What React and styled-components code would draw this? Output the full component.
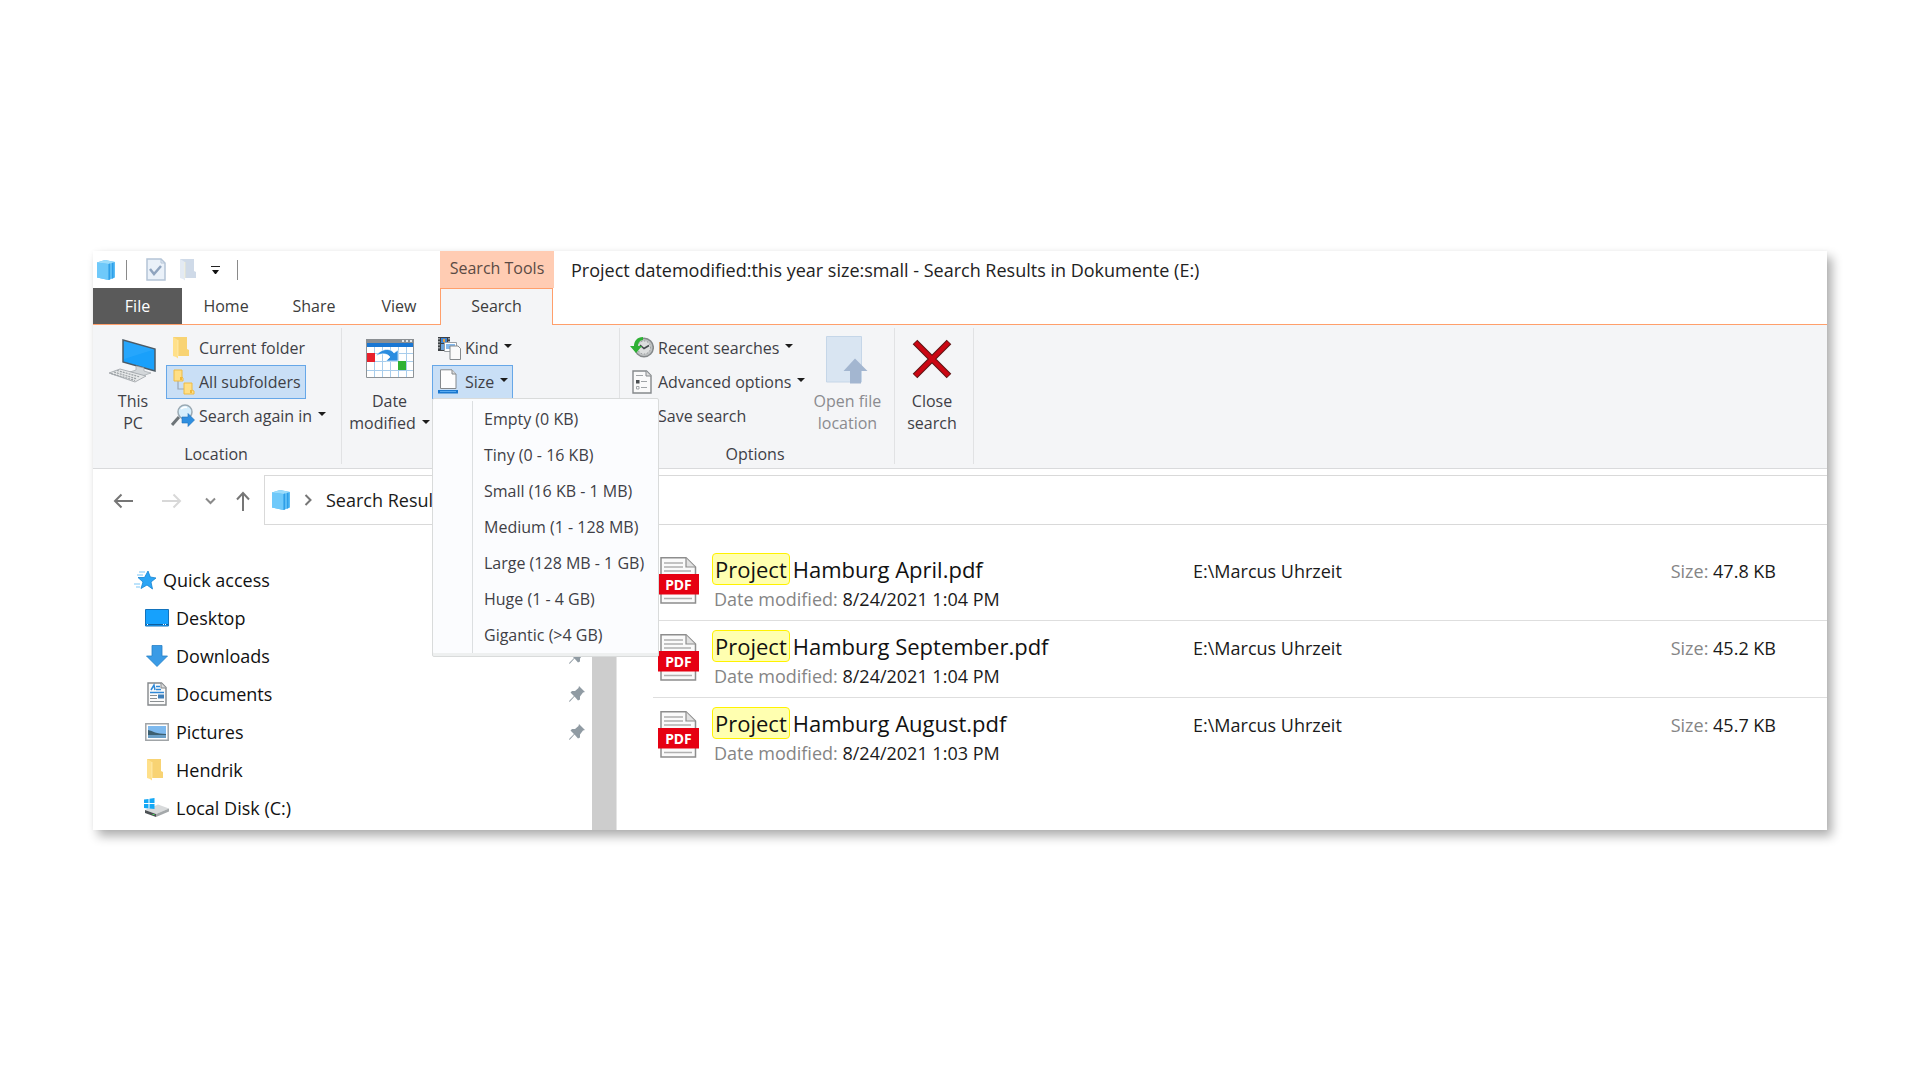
import React from 'react';
import styled, { createGlobalStyle, css } from 'styled-components';

const GlobalStyle = createGlobalStyle`
    *, *::before, *::after {
        box-sizing: border-box;
    }
    body {
        margin: 0;
        background: #ffffff;
        color: #1a1a1a;
        font-family: "Open Sans", "Noto Sans", sans-serif;
        font-size: 18px;
    }
    svg {
        display: block;
        flex: none;
    }
`

/* ---------- icons ---------- */

const CubeIcon = () => (
    <svg width="18" height="20" viewBox="0 0 18 20">
        <path d="M0 2.5 8 0l10 2v15.5L11.500 20 0 17.500z" fill="#5cbdf5" />
        <path d="M0 2.500 8 0l10 2-6.500 2z" fill="#9bdcfb" />
        <path d="M0 2.500 11.500 4v16L0 17.500z" fill="#6fc9fa" />
        <path d="M11.500 4 13 3.500v16l-1.500.500zM15 3l1.500-.400v15.500L15 18.700z" fill="#2e9fe8" />
    </svg>
)

const CheckDocIcon = () => (
    <svg width="20" height="23" viewBox="0 0 20 23">
        <path d="M1 1h14l4 4v17H1z" fill="#eaf1f9" stroke="#b4c4d6" strokeWidth="1.500" />
        <path d="M15 1v4h4" fill="none" stroke="#b4c4d6" />
        <path d="m4 11 4 5 7-8" fill="none" stroke="#8fa4bf" strokeWidth="2.500" />
    </svg>
)

const FolderIcon = ({ front = '#ffe08a', back = '#f8d373' }) => (
    <svg width="16" height="22" viewBox="0 0 16 22">
        <path d="M0 0h14v12l2 1v6H3z" fill={back} />
        <path d="M0 0 5 3v18.500L3 20l-3-1z" fill={front} />
        <path d="M5 3v16" stroke="#fff3c4" strokeOpacity=".6" />
    </svg>
)

const PcIcon = () => (
    <svg width="48" height="44" viewBox="0 0 48 44">
        <path d="M14 1 46 10v22L14 23z" fill="#19a0fb" stroke="#4d5b66" strokeWidth="1.500" />
        <path d="M15 2 45 10.500 15 20z" fill="#47b6ff" opacity=".3" />
        <path d="m27 27 8 2v3l7 2-9 3-12-4 6-2z" fill="#d3d7da" stroke="#a3a9ad" strokeWidth=".7" />
        <path d="m11 30 26 7-11 6L0 34z" fill="#e6e8e9" stroke="#9ba0a4" strokeWidth=".8" />
        <path d="m5 33 23 7M8 31.500l23 6.500M2 34.500l24 7" stroke="#9ba0a4" strokeWidth="1.200" strokeDasharray="2 1" />
    </svg>
)

const SubfoldersIcon = () => (
    <svg width="22" height="26" viewBox="0 0 22 26">
        <path d="M5 12v8h6" fill="none" stroke="#9aa7b5" strokeWidth="1.200" />
        <path d="M1 1h8v7l1 1v3H1z" fill="#ffdf85" stroke="#eebb45" />
        <path d="M11 14h8v7l2 1v3H11z" fill="#ffdf85" stroke="#eebb45" />
        <path d="M7 8h2v3H7zM17 21h2v3h-2z" fill="#f0b93c" />
    </svg>
)

const SearchAgainIcon = () => (
    <svg width="24" height="23" viewBox="0 0 24 23">
        <path d="m1 21 7-8" stroke="#6d7478" strokeWidth="3" />
        <circle cx="14" cy="8" r="7" fill="#d5eefc" stroke="#9aa9b3" strokeWidth="1.500" />
        <path d="M10 5a6 6 0 0 1 6-1.500" fill="none" stroke="#ffffff" strokeWidth="1.500" />
        <path d="M11 13h6V9.500l6.500 6.500-6.500 6.500V19h-6z" fill="#2f8fe0" stroke="#1c6fba" strokeWidth=".6" />
    </svg>
)

const CalendarIcon = () => (
    <svg width="48" height="39" viewBox="0 0 48 39">
        <path d="M.500.500h47v38H.500z" fill="#ffffff" stroke="#8d9296" />
        <path d="M0 0h48v4H0z" fill="#8b8f93" />
        <path d="M36 1h2v2h-2zM40 1h2v2h-2zM44 1h2v2h-2z" fill="#e4e6e7" />
        <path d="M1 4h46v4H1z" fill="#1976d2" />
        <path d="M8.500 8v30M16.500 8v30M24.500 8v30M32.500 8v30M40.500 8v30M1 14.500h46M1 22.500h46M1 31.500h46" stroke="#a8cdec" />
        <path d="M1 14h8v9H1z" fill="#e8202c" />
        <path d="M32 22h8v9h-8z" fill="#2fb233" />
        <path d="M10 17c4-7 14-9 18-3l4-3v11H20l4-4c-3-4-9-4-14-1z" fill="#2b8de0" stroke="#ffffff" strokeWidth=".6" />
    </svg>
)

const KindIcon = () => (
    <svg width="24" height="24" viewBox="0 0 24 24">
        <path d="M1 1h12v14H1z" fill="#3d4145" />
        <path d="M2 2v12M12 2v12" stroke="#d7dadc" strokeWidth="1.200" strokeDasharray="1.500 1.500" />
        <path d="M4 2h6v5H4z" fill="#3f86d8" />
        <path d="M6 3h2v3H6z" fill="#e8a23d" />
        <path d="M4 8h6v6H4z" fill="#6aa3dd" />
        <path d="M7.500 6.500h12v9h-12z" fill="#ffffff" stroke="#9a9fa3" />
        <path d="M9 8h9v5H9z" fill="#84b9ee" />
        <path d="M13 10h8l2.500 2.500V23.500H13z" fill="#fafafa" stroke="#85898c" />
    </svg>
)

const SizeIcon = () => (
    <svg width="22" height="25" viewBox="0 0 22 25">
        <path d="M3.500.800h11.500l4 4.200v14.500H3.500z" fill="#fdfdfd" stroke="#85898c" />
        <path d="M15 1v4h4" fill="#dddddd" stroke="#85898c" />
        <path d="M1 21h20v3.500H1z" fill="#1b78cf" />
        <path d="M3 22.500h16" stroke="#59aaf0" />
    </svg>
)

const RecentIcon = () => (
    <svg width="24" height="21" viewBox="0 0 24 21">
        <circle cx="14" cy="10.500" r="9.300" fill="#bfc2c3" stroke="#85898b" strokeWidth="1.500" />
        <circle cx="14" cy="10.500" r="6.500" fill="#dcdede" stroke="#8f9395" strokeDasharray="1 2" />
        <path d="m10 8 4 3.500 5-3" fill="none" stroke="#44494c" strokeWidth="1.500" />
        <path d="M13 0C7 0 4 4 4 9H0l6 7 6-7H8c0-3 2-6 5-6z" fill="#2eb135" />
    </svg>
)

const AdvancedIcon = () => (
    <svg width="20" height="24" viewBox="0 0 20 24">
        <path d="M1 1h13.500L19 5.500V23H1z" fill="#fafafa" stroke="#85898c" strokeWidth="1.400" />
        <path d="M14 1v5h5" fill="#dedede" stroke="#85898c" />
        <path d="M4 5.500h7M9 11.500h6M9 17.500h6" stroke="#a0a4a7" />
        <path d="M4 10h3.500v3.500H4z" fill="#4a4e51" />
        <path d="M4.500 16.500h2.500v2.500H4.500z" fill="#fff" stroke="#a0a4a7" />
    </svg>
)

const OpenLocationIcon = () => (
    <svg width="42" height="48" viewBox="0 0 42 48">
        <path d="M.500.500h35V46H.500z" fill="#d9e5f2" stroke="#c5d6e8" />
        <path d="M29 22.500 41.500 35H35v12.500H24V35h-6.500z" fill="#a3b6d0" />
    </svg>
)

const CloseIcon = () => (
    <svg width="40" height="40" viewBox="0 0 40 40">
        <path d="m3 3 34 34M37 3 3 37" stroke="#5c1414" strokeWidth="6.500" />
        <path d="m3.500 3.500 33 33M36.500 3.500l-33 33" stroke="#cb0713" strokeWidth="4.500" />
    </svg>
)

const ArrowIcon = ({ color = '#767676', flip }) => (
    <svg width="20" height="16" viewBox="0 0 20 16">
        <path d={flip ? 'M0 8h18M11.500 1.500 18 8l-6.500 6.500' : 'M20 8H2M8.500 1.500 2 8l6.500 6.500'} fill="none" stroke={color} strokeWidth="2" />
    </svg>
)

const DownChevron = () => (
    <svg width="11" height="8" viewBox="0 0 11 8">
        <path d="m1 1.500 4.500 4.500L10 1.500" fill="none" stroke="#8a8a8a" strokeWidth="2" />
    </svg>
)

const UpIcon = () => (
    <svg width="14" height="20" viewBox="0 0 14 20">
        <path d="M7 20V2M1 8.500 7 2l6 6.500" fill="none" stroke="#767676" strokeWidth="2" />
    </svg>
)

const RightChevron = () => (
    <svg width="8" height="12" viewBox="0 0 8 12">
        <path d="m1.500 1 5 5-5 5" fill="none" stroke="#767676" strokeWidth="2" />
    </svg>
)

const StarIcon = () => (
    <svg width="22" height="20" viewBox="0 0 22 20">
        <path d="m14 1 2.300 6L22 8l-5 4 1.500 7-5.500-4-6 3.500 2-6.500L4 7.500h6.500z" fill="#2ba5f5" stroke="#1583d1" strokeWidth=".8" />
        <path d="M5 2h6M3 5h6M0 14h6M2 17h4" stroke="#7cc7f7" strokeWidth="1.200" />
    </svg>
)

const DesktopIcon = () => (
    <svg width="24" height="18" viewBox="0 0 24 18">
        <path d="M.500.500h23v16.500H.500z" fill="#16a1fd" stroke="#1273bd" />
        <path d="M1 15.500h22" stroke="#0e5f9f" />
        <path d="M2 15.500h1M18 15.500h1M20 15.500h1" stroke="#fff" />
    </svg>
)

const DownloadIcon = () => (
    <svg width="22" height="22" viewBox="0 0 22 22">
        <path d="M6 .500h10V11h5.500L11 21.500.500 11H6z" fill="#3a9be6" stroke="#2680c7" strokeWidth=".8" />
    </svg>
)

const DocumentIcon = () => (
    <svg width="20" height="24" viewBox="0 0 20 24">
        <path d="M1 1h13.500L19 5.500V23H1z" fill="#fbfbfb" stroke="#85898c" strokeWidth="1.400" />
        <path d="M14 1v5h5" fill="#dedede" stroke="#85898c" />
        <path d="m4 8 3-5 1 5M9 4.500h4M9 7.500h5M3 10.500h14" fill="none" stroke="#2f88d6" strokeWidth="1.500" />
        <path d="M3 13.500h7M3 16.500h7M3 19.500h14" stroke="#8b9093" />
        <path d="M11 12.500h6v4h-6z" fill="#3f7fb8" />
    </svg>
)

const PictureIcon = () => (
    <svg width="24" height="18" viewBox="0 0 24 18">
        <path d="M.800.800h22.400v16.400H.800z" fill="#ffffff" stroke="#a0a4a7" strokeWidth="1.500" />
        <path d="M3 3h18v12H3z" fill="#7db9ee" />
        <path d="M3 7c5 1 8 4 18 4v4H3z" fill="#3d5f70" />
        <path d="M3 12h18v3H3z" fill="#6b9fc6" />
    </svg>
)

const DiskIcon = () => (
    <svg width="25" height="19" viewBox="0 0 25 19">
        <path d="M1 12 14 6.500l11 4L12 16z" fill="#d8dadb" />
        <path d="m1 12 11 4v3L1 15z" fill="#4c5154" />
        <path d="m12 16 13-5.500v3L12 19z" fill="#a4a8aa" />
        <path d="M8.500 16h2v1h-2z" fill="#4fdc5d" />
        <path d="m0 1.500 4.500-.600V5H0zM5.500.700 10.500 0v5h-5zM0 6h4.500v4.500L0 10zM5.500 6h5v5l-5-.600z" fill="#15a8f5" />
    </svg>
)

const PinIcon = () => (
    <svg width="16" height="16" viewBox="0 0 16 16">
        <path d="m10 0 6 6-2 .500-3 4 0 3-2 1-3.500-4L1 15.500 0 16l.500-1.500L5 10 1.500 6.500l1.500-1.500 3 0 3.500-3z" fill="#909ba3" />
    </svg>
)

const PdfIcon = () => (
    <svg width="42" height="47" viewBox="0 0 42 47">
        <path d="M3 .800h25L37.500 10v36H3z" fill="#fafafa" stroke="#8d8d8d" strokeWidth="1.500" />
        <path d="M28 1v9h9" fill="#e2e2e2" stroke="#8d8d8d" strokeWidth="1.200" />
        <path d="M6 6h19M6 10h19M6 14h27M6 41.500h28" stroke="#b0b0b0" strokeWidth="1.500" />
        <path d="M0 17h41v20.500H0z" fill="#e60012" />
        <text x="20.500" y="32.500" textAnchor="middle" fontFamily="Noto Sans" fontSize="14" fontWeight="700" fill="#ffffff">PDF</text>
    </svg>
)

/* ---------- layout ---------- */

const Page = styled.main`
    min-height: 100vh;
    padding: 0 93px;
    display: flex;
    align-items: center;
`
const Window = styled.section`
    flex: 1;
    min-width: 0;
    background: #ffffff;
    box-shadow: 5px 6px 10px rgba(0, 0, 0, 0.32), 0 0 4px rgba(0, 0, 0, 0.03);
`
const plainButton = css`
    border: 1px solid transparent;
    background: none;
    padding: 0;
    margin: 0;
    font: inherit;
    color: inherit;
    cursor: pointer;
`
const TitleBar = styled.header`
    display: flex;
    height: 37px;
`
const QuickBar = styled.div`
    flex: 0 0 347px;
    display: flex;
    align-items: center;
    padding: 1px 0 0 4px;
`
const QuickButton = styled.button`
    ${plainButton}
    border: 0;
    margin-left: ${props => props.$gap || 0}px;
`
const Divider = styled.span`
    width: 1px;
    height: 20px;
    margin-left: ${props => props.$gap}px;
    background: #8a8a8a;
`
const QuickCaret = styled.span`
    display: block;
    width: 9px;
    border-top: 1px solid #222222;
    padding-top: 3px;

    &::after {
        content: "";
        display: block;
        width: 7px;
        margin: 0 auto;
        border: solid transparent;
        border-width: 4px 3px 0;
        border-top-color: #111111;
    }
`
const ToolsTab = styled.div`
    flex: 0 0 114px;
    padding-bottom: 2px;
    display: flex;
    align-items: center;
    justify-content: center;
    background: #ffccb3;
    color: #5a4a44;
    font-size: 16px;
`
const WindowTitle = styled.h1`
    margin: 0;
    padding: 1px 17px 0;
    align-self: center;
    font-size: 18px;
    line-height: 24px;
    font-weight: 400;
    white-space: nowrap;
    color: #222222;
`
const Tabs = styled.nav`
    display: flex;
    height: 37px;
    border-bottom: 1px solid #ff9f6b;
`
const Tab = styled.button`
    ${plainButton}
    width: ${props => props.$width}px;
    font-size: 16px;
    color: #3c3c3c;

    ${props => props.$file && css`
        background: #5a5a5a;
        color: #ffffff;
    `}
    ${props => props.$active && css`
        margin-bottom: -1px;
        border: 1px solid #ff9f6b;
        border-bottom: 0;
        padding-bottom: 2px;
        background: #f4f5f7;
    `}
`
const Ribbon = styled.div`
    display: flex;
    height: 144px;
    padding: 3px 0 4px;
    background: #f4f5f7;
    border-bottom: 1px solid #d9dadc;
    font-size: 16px;
    color: #3f3f46;
`
const Group = styled.div`
    width: ${props => props.$width}px;
    display: flex;
    flex-direction: column;
    justify-content: space-between;
    border-right: 1px solid #e1e2e4;
`
const GroupBody = styled.div`
    display: flex;
    padding-left: ${props => props.$left || 0}px;
`
const GroupLabel = styled.div`
    padding-right: ${props => props.$shift || 0}px;
    text-align: center;
    line-height: 20px;
`
const BigButton = styled.button`
    ${plainButton}
    width: ${props => props.$width}px;
    height: 108px;
    padding-top: 7px;
    display: flex;
    flex-direction: column;
    align-items: center;
    line-height: 22px;
    white-space: nowrap;

    &:disabled {
        color: #8b8b8f;
        cursor: default;
    }
`
const BigIcon = styled.span`
    height: 54px;
    padding-top: ${props => props.$top || 0}px;
`
const SmallList = styled.div`
    display: flex;
    flex-direction: column;
    align-items: flex-start;
    padding-top: 3px;
`
const MenuAnchor = styled.div`
    position: relative;
`
const SmallButton = styled.button`
    ${plainButton}
    height: 34px;
    padding: 0 4px;
    display: flex;
    align-items: center;
    line-height: 20px;
    white-space: nowrap;

    ${props => props.$active && css`
        background: #c9dff6;
        border-color: #66a7e8;
    `}
`
const SmallIcon = styled.span`
    width: 28px;
    display: flex;
    padding-left: ${props => props.$left || 0}px;
`
const Caret = styled.span`
    display: inline-block;
    margin-left: 6px;
    margin-bottom: 4px;
    vertical-align: middle;
    border: solid transparent;
    border-width: 4px 4px 0;
    border-top-color: #1c1c1c;
`
const Menu = styled.ul`
    position: absolute;
    z-index: 5;
    top: 33px;
    left: 0;
    width: 227px;
    margin: 0;
    padding: 2px 2px 3px;
    list-style: none;
    background: #fbfcfe;
    border: 1px solid #d9dbdb;
    border-radius: 2px;
    box-shadow: inset 0 -3px 0 #eef0f0;
`
const MenuItem = styled.li`
    margin-left: 37px;
    border-left: 1px solid #dcdfe1;
`
const MenuButton = styled.button`
    ${plainButton}
    width: 100%;
    height: 36px;
    padding: 0 0 0 10px;
    text-align: left;
    white-space: nowrap;
`
const AddressRow = styled.div`
    display: flex;
    align-items: center;
    padding-top: 6px;
`
const NavButtons = styled.div`
    flex: 0 0 171px;
    padding: 2px 0 0 20px;
    display: flex;
    align-items: center;
`
const NavButton = styled.button`
    ${plainButton}
    border: 0;
    margin-right: ${props => props.$gap || 0}px;
`
const AddressBox = styled.div`
    flex: 1;
    height: 50px;
    padding-left: 7px;
    display: flex;
    align-items: center;
    gap: 14px;
    border: 1px solid #d9d9d9;
    border-right: 0;
    line-height: 24px;
`
const Content = styled.div`
    display: flex;
    height: 305px;
`
const Sidebar = styled.ul`
    flex: 0 0 499px;
    margin: 0;
    padding: 36px 0 0;
    list-style: none;
`
const SideItem = styled.li`
    height: 38px;
    padding: 0 7px 0 ${props => (props.$root ? 41 : 51)}px;
    display: flex;
    align-items: center;
    justify-content: space-between;
`
const SideLink = styled.a`
    display: flex;
    align-items: center;
    line-height: 24px;
    color: #111111;
    text-decoration: none;
`
const SideIcon = styled.span`
    width: ${props => (props.$root ? 29 : 32)}px;
    display: flex;
    padding-left: ${props => props.$left || 0}px;
`
const ScrollTrack = styled.div`
    flex: 0 0 25px;
    background: #cdcdcd;
    border-right: 1px solid #e4e4e4;
`
const Results = styled.div`
    flex: 1;
    min-width: 0;
    padding: 19px 0 0 36px;
`
const ResultTable = styled.table`
    width: 100%;
    table-layout: fixed;
    border-collapse: collapse;
`
const ResultRow = styled.tr`
    & + & {
        border-top: 1px solid #dedede;
    }
`
const Cell = styled.td`
    width: ${props => (props.$width ? props.$width + 'px' : 'auto')};
    height: 77px;
    padding: ${props => props.$pad || '0'};
    vertical-align: top;
    line-height: 24px;
    text-align: ${props => props.$align || 'left'};
    white-space: nowrap;
`
const FileName = styled.a`
    display: flex;
    align-items: center;
    gap: 3px;
    font-size: 22px;
    line-height: 30px;
    color: #111111;
    text-decoration: none;
`
const FileDate = styled.div`
    padding-left: 2px;
    line-height: 28px;
`
const Mark = styled.mark`
    padding: 0 2px;
    background: #ffffb0;
    border: 1px solid #fff200;
    border-radius: 4px;
    color: inherit;
`
const Muted = styled.span`
    color: #858585;
`

const sizes = [
    'Empty (0 KB)',
    'Tiny (0 - 16 KB)',
    'Small (16 KB - 1 MB)',
    'Medium (1 - 128 MB)',
    'Large (128 MB - 1 GB)',
    'Huge (1 - 4 GB)',
    'Gigantic (>4 GB)',
]

const places = [
    { name: 'Desktop', icon: <DesktopIcon />, left: 1, pinned: true },
    { name: 'Downloads', icon: <DownloadIcon />, left: 2, pinned: true },
    { name: 'Documents', icon: <DocumentIcon />, left: 3, pinned: true },
    { name: 'Pictures', icon: <PictureIcon />, left: 1, pinned: true },
    { name: 'Hendrik', icon: <FolderIcon />, left: 3 },
    { name: 'Local Disk (C:)', icon: <DiskIcon />, left: 0 },
]

const files = [
    { name: 'Hamburg April.pdf', date: '8/24/2021 1:04 PM', size: '47.8 KB' },
    { name: 'Hamburg September.pdf', date: '8/24/2021 1:04 PM', size: '45.2 KB' },
    { name: 'Hamburg August.pdf', date: '8/24/2021 1:03 PM', size: '45.7 KB' },
]

const SmallAction = ({ icon, left, label, caret, active }) => (
    <SmallButton type="button" $active={active}>
        <SmallIcon $left={left}>{icon}</SmallIcon>
        {label}
        {caret && <Caret />}
    </SmallButton>
)

const SearchRibbon = () => (
    <Ribbon>
        <Group $width={249}>
            <GroupBody $left={7}>
                <BigButton type="button" $width={66}>
                    <BigIcon $top={3}><PcIcon /></BigIcon>
                    <span>This</span>
                    <span>PC</span>
                </BigButton>
                <SmallList>
                    <SmallAction icon={<FolderIcon />} left={2} label="Current folder" />
                    <SmallAction icon={<SubfoldersIcon />} left={2} label="All subfolders" active />
                    <SmallAction icon={<SearchAgainIcon />} label="Search again in" caret />
                </SmallList>
            </GroupBody>
            <GroupLabel $shift={2}>Location</GroupLabel>
        </Group>
        <Group $width={278}>
            <GroupBody $left={5}>
                <BigButton type="button" $width={85}>
                    <BigIcon $top={3}><CalendarIcon /></BigIcon>
                    <span>Date</span>
                    <span>modified<Caret /></span>
                </BigButton>
                <SmallList>
                    <SmallAction icon={<KindIcon />} label="Kind" caret />
                    <MenuAnchor>
                        <SmallAction icon={<SizeIcon />} label="Size" caret active />
                        <Menu>
                            {sizes.map(size => (
                                <MenuItem key={size}>
                                    <MenuButton type="button">{size}</MenuButton>
                                </MenuItem>
                            ))}
                        </Menu>
                    </MenuAnchor>
                </SmallList>
            </GroupBody>
        </Group>
        <Group $width={275}>
            <GroupBody $left={5}>
                <SmallList>
                    <SmallAction icon={<RecentIcon />} label="Recent searches" caret />
                    <SmallAction icon={<AdvancedIcon />} left={2} label="Advanced options" caret />
                    <SmallAction label="Save search" />
                </SmallList>
                <BigButton type="button" $width={74} disabled>
                    <BigIcon><OpenLocationIcon /></BigIcon>
                    <span>Open file</span>
                    <span>location</span>
                </BigButton>
            </GroupBody>
            <GroupLabel $shift={4}>Options</GroupLabel>
        </Group>
        <Group $width={79}>
            <BigButton type="button" $width={74}>
                <BigIcon $top={3}><CloseIcon /></BigIcon>
                <span>Close</span>
                <span>search</span>
            </BigButton>
        </Group>
    </Ribbon>
)

const ResultList = () => (
    <ResultTable>
        <tbody>
            {files.map(file => (
                <ResultRow key={file.name}>
                    <Cell $width={59} $pad="13px 0 0 5px"><PdfIcon /></Cell>
                    <Cell $width={481} $pad="9px 0 0">
                        <FileName href="#">
                            <Mark>Project</Mark>
                            {file.name}
                        </FileName>
                        <FileDate><Muted>Date modified:</Muted> {file.date}</FileDate>
                    </Cell>
                    <Cell $pad="15px 0 0">E:\Marcus Uhrzeit</Cell>
                    <Cell $pad="15px 51px 0 0" $align="right"><Muted>Size:</Muted> {file.size}</Cell>
                </ResultRow>
            ))}
        </tbody>
    </ResultTable>
)

const App = () => {
    return (
        <Page>
            <GlobalStyle />
            <Window>
                <TitleBar>
                    <QuickBar>
                        <CubeIcon />
                        <Divider $gap={11} />
                        <QuickButton type="button" aria-label="Properties" $gap={19}><CheckDocIcon /></QuickButton>
                        <QuickButton type="button" aria-label="New folder" $gap={14}>
                            <FolderIcon front="#e3eaf3" back="#cfdae8" />
                        </QuickButton>
                        <QuickButton type="button" aria-label="Customize" $gap={15}><QuickCaret /></QuickButton>
                        <Divider $gap={17} />
                    </QuickBar>
                    <ToolsTab>Search Tools</ToolsTab>
                    <WindowTitle>Project datemodified:this year size:small - Search Results in Dokumente (E:)</WindowTitle>
                </TitleBar>
                <Tabs>
                    <Tab type="button" $width={89} $file>File</Tab>
                    <Tab type="button" $width={88}>Home</Tab>
                    <Tab type="button" $width={88}>Share</Tab>
                    <Tab type="button" $width={82}>View</Tab>
                    <Tab type="button" $width={113} $active>Search</Tab>
                </Tabs>
                <SearchRibbon />
                <AddressRow>
                    <NavButtons>
                        <NavButton type="button" aria-label="Back" $gap={29}><ArrowIcon /></NavButton>
                        <NavButton type="button" aria-label="Forward" $gap={23}><ArrowIcon flip color="#d8d8d8" /></NavButton>
                        <NavButton type="button" aria-label="Recent locations" $gap={20}><DownChevron /></NavButton>
                        <NavButton type="button" aria-label="Up"><UpIcon /></NavButton>
                    </NavButtons>
                    <AddressBox>
                        <CubeIcon />
                        <RightChevron />
                        <span>Search Results</span>
                    </AddressBox>
                </AddressRow>
                <Content>
                    <Sidebar>
                        <SideItem $root>
                            <SideLink href="#"><SideIcon $root><StarIcon /></SideIcon>Quick access</SideLink>
                        </SideItem>
                        {places.map(place => (
                            <SideItem key={place.name}>
                                <SideLink href="#"><SideIcon $left={place.left}>{place.icon}</SideIcon>{place.name}</SideLink>
                                {place.pinned && <PinIcon />}
                            </SideItem>
                        ))}
                    </Sidebar>
                    <ScrollTrack />
                    <Results>
                        <ResultList />
                    </Results>
                </Content>
            </Window>
        </Page>
    )
}

export default App;
